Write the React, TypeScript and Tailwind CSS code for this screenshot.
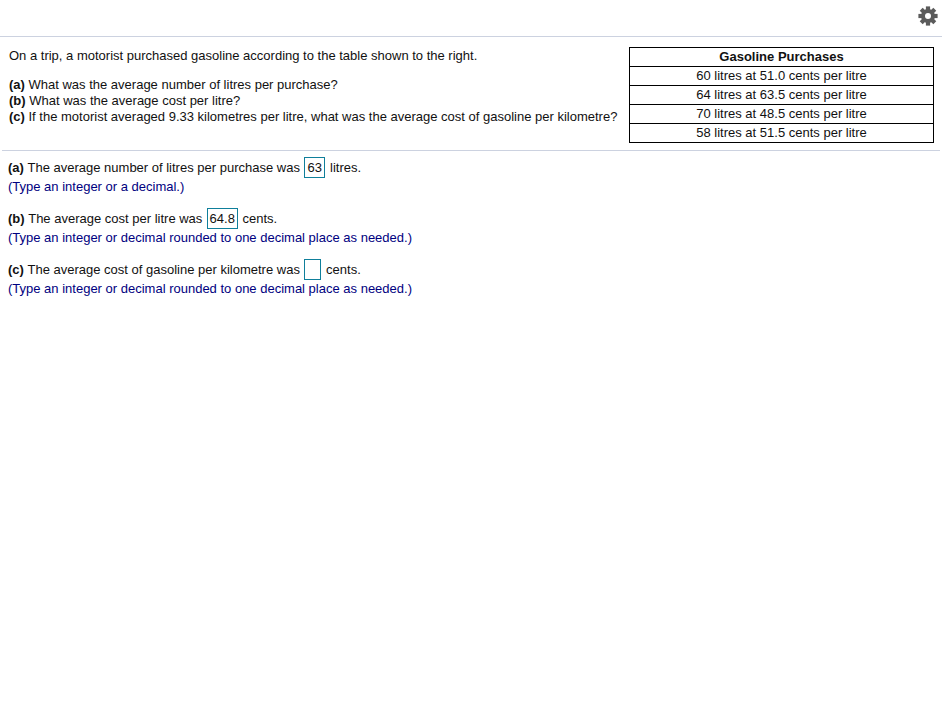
const purchases = [
  '60 litres at 51.0 cents per litre',
  '64 litres at 63.5 cents per litre',
  '70 litres at 48.5 cents per litre',
  '58 litres at 51.5 cents per litre',
]

function GearIcon() {
  return (
    <svg viewBox="0 0 20 20" className="h-[20px] w-[20px] text-[#5b5b5b]" fill="currentColor">
      {[0, 45, 90, 135, 180, 225, 270, 315].map((angle) => (
        <rect key={angle} x="7.9" y="0.4" width="4.2" height="5" transform={`rotate(${angle} 10 10)`} />
      ))}
      <circle cx="10" cy="10" r="5" fill="none" stroke="currentColor" strokeWidth="4" />
    </svg>
  )
}

function AnswerBox({ value, width }: { value?: string; width: string }) {
  return (
    <span className={`ml-[4.4px] mr-[4.8px] inline-block h-[21px] border border-[#0f7f9b] text-center align-middle leading-[19px] ${width}`}>
      {value}
    </span>
  )
}

function Answer({ label, before, value, after, hint, width }: {
  label: string
  before: string
  value?: string
  after: string
  hint: string
  width: string
}) {
  return (
    <div className="mb-[13px]">
      <div className="flex h-[19px] items-center">
        <b className="mr-[3.6px] font-bold">{label}</b>
        <span className="whitespace-pre">{before}</span>
        <AnswerBox value={value} width={width} />
        <span>{after}</span>
      </div>
      <div className="flex h-[19px] items-center text-[#000080]">{hint}</div>
    </div>
  )
}

export default function App() {
  return (
    <div className="h-[708px] w-[942px] bg-white font-['Liberation_Sans',Arial,sans-serif] text-[13px] text-[#111]">
      {/* Toolbar */}
      <div className="flex h-[37px] items-start justify-end border-b border-[#ccd2e0] pr-[4.5px] pt-[6px]">
        <GearIcon />
      </div>

      {/* Question */}
      <div className="mx-[2px] flex h-[114px] w-[938px] justify-between border-b border-[#ccd2e0] pl-[7px] pr-[6px]">
        <div className="pt-[9px]">
          <p className="h-[19px] leading-[19px]">On a trip, a motorist purchased gasoline according to the table shown to the right.</p>
          <div className="mt-[12px] leading-[16px]">
            <p><b className="font-bold">(a)</b> What was the average number of litres per purchase?</p>
            <p><b className="font-bold">(b)</b> What was the average cost per litre?</p>
            <p><b className="font-bold">(c)</b> If the motorist averaged 9.33 kilometres per litre, what was the average cost of gasoline per kilometre?</p>
          </div>
        </div>
        <div className="mt-[10px] h-[96px] w-[305px] border border-black text-center">
          <div className="h-[19px] border-b border-black font-bold leading-[18px]">Gasoline Purchases</div>
          {purchases.map((row, i) => (
            <div key={row} className={`leading-[18px] ${i < 3 ? 'h-[19px] border-b border-black' : 'h-[18px]'}`}>{row}</div>
          ))}
        </div>
      </div>

      {/* Answers */}
      <div className="pl-[8px] pt-[7px]">
        <Answer label="(a)" before="The average number of litres per purchase was" value="63" after="litres." hint="(Type an integer or a decimal.)" width="w-[21px]" />
        <Answer label="(b)" before="The average cost per litre was" value="64.8" after="cents." hint="(Type an integer or decimal rounded to one decimal place as needed.)" width="w-[31px]" />
        <Answer label="(c)" before="The average cost of gasoline per kilometre was" after="cents." hint="(Type an integer or decimal rounded to one decimal place as needed.)" width="w-[17px]" />
      </div>
    </div>
  )
}
